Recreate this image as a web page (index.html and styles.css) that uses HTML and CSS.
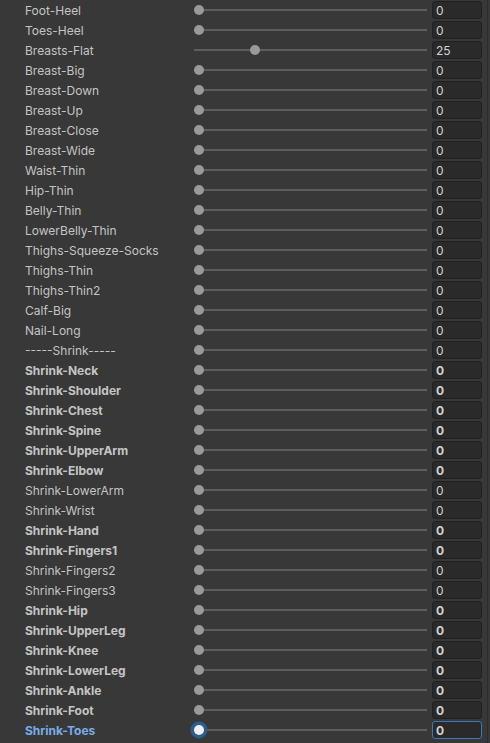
FILE: index.html
```html
<!DOCTYPE html>
<html>
<head>
<meta charset="utf-8">
<link rel="stylesheet" href="styles.css">
</head>
<body>
<div class="panel">
  <div class="list">
    <div class="row"><span class="label">Foot-Heel</span><div class="slider"><div class="track"></div><div class="thumb" style="left:0px"></div></div><div class="field">0</div></div>
    <div class="row"><span class="label">Toes-Heel</span><div class="slider"><div class="track"></div><div class="thumb" style="left:0px"></div></div><div class="field">0</div></div>
    <div class="row"><span class="label">Breasts-Flat</span><div class="slider"><div class="track"></div><div class="thumb" style="left:56px"></div></div><div class="field">25</div></div>
    <div class="row"><span class="label">Breast-Big</span><div class="slider"><div class="track"></div><div class="thumb" style="left:0px"></div></div><div class="field">0</div></div>
    <div class="row"><span class="label">Breast-Down</span><div class="slider"><div class="track"></div><div class="thumb" style="left:0px"></div></div><div class="field">0</div></div>
    <div class="row"><span class="label">Breast-Up</span><div class="slider"><div class="track"></div><div class="thumb" style="left:0px"></div></div><div class="field">0</div></div>
    <div class="row"><span class="label">Breast-Close</span><div class="slider"><div class="track"></div><div class="thumb" style="left:0px"></div></div><div class="field">0</div></div>
    <div class="row"><span class="label">Breast-Wide</span><div class="slider"><div class="track"></div><div class="thumb" style="left:0px"></div></div><div class="field">0</div></div>
    <div class="row"><span class="label">Waist-Thin</span><div class="slider"><div class="track"></div><div class="thumb" style="left:0px"></div></div><div class="field">0</div></div>
    <div class="row"><span class="label">Hip-Thin</span><div class="slider"><div class="track"></div><div class="thumb" style="left:0px"></div></div><div class="field">0</div></div>
    <div class="row"><span class="label">Belly-Thin</span><div class="slider"><div class="track"></div><div class="thumb" style="left:0px"></div></div><div class="field">0</div></div>
    <div class="row"><span class="label">LowerBelly-Thin</span><div class="slider"><div class="track"></div><div class="thumb" style="left:0px"></div></div><div class="field">0</div></div>
    <div class="row"><span class="label">Thighs-Squeeze-Socks</span><div class="slider"><div class="track"></div><div class="thumb" style="left:0px"></div></div><div class="field">0</div></div>
    <div class="row"><span class="label">Thighs-Thin</span><div class="slider"><div class="track"></div><div class="thumb" style="left:0px"></div></div><div class="field">0</div></div>
    <div class="row"><span class="label">Thighs-Thin2</span><div class="slider"><div class="track"></div><div class="thumb" style="left:0px"></div></div><div class="field">0</div></div>
    <div class="row"><span class="label">Calf-Big</span><div class="slider"><div class="track"></div><div class="thumb" style="left:0px"></div></div><div class="field">0</div></div>
    <div class="row"><span class="label">Nail-Long</span><div class="slider"><div class="track"></div><div class="thumb" style="left:0px"></div></div><div class="field">0</div></div>
    <div class="row"><span class="label">-----Shrink-----</span><div class="slider"><div class="track"></div><div class="thumb" style="left:0px"></div></div><div class="field">0</div></div>
    <div class="row mod"><span class="label">Shrink-Neck</span><div class="slider"><div class="track"></div><div class="thumb" style="left:0px"></div></div><div class="field">0</div></div>
    <div class="row mod"><span class="label">Shrink-Shoulder</span><div class="slider"><div class="track"></div><div class="thumb" style="left:0px"></div></div><div class="field">0</div></div>
    <div class="row mod"><span class="label">Shrink-Chest</span><div class="slider"><div class="track"></div><div class="thumb" style="left:0px"></div></div><div class="field">0</div></div>
    <div class="row mod"><span class="label">Shrink-Spine</span><div class="slider"><div class="track"></div><div class="thumb" style="left:0px"></div></div><div class="field">0</div></div>
    <div class="row mod"><span class="label">Shrink-UpperArm</span><div class="slider"><div class="track"></div><div class="thumb" style="left:0px"></div></div><div class="field">0</div></div>
    <div class="row mod"><span class="label">Shrink-Elbow</span><div class="slider"><div class="track"></div><div class="thumb" style="left:0px"></div></div><div class="field">0</div></div>
    <div class="row"><span class="label">Shrink-LowerArm</span><div class="slider"><div class="track"></div><div class="thumb" style="left:0px"></div></div><div class="field">0</div></div>
    <div class="row"><span class="label">Shrink-Wrist</span><div class="slider"><div class="track"></div><div class="thumb" style="left:0px"></div></div><div class="field">0</div></div>
    <div class="row mod"><span class="label">Shrink-Hand</span><div class="slider"><div class="track"></div><div class="thumb" style="left:0px"></div></div><div class="field">0</div></div>
    <div class="row mod"><span class="label">Shrink-Fingers1</span><div class="slider"><div class="track"></div><div class="thumb" style="left:0px"></div></div><div class="field">0</div></div>
    <div class="row"><span class="label">Shrink-Fingers2</span><div class="slider"><div class="track"></div><div class="thumb" style="left:0px"></div></div><div class="field">0</div></div>
    <div class="row"><span class="label">Shrink-Fingers3</span><div class="slider"><div class="track"></div><div class="thumb" style="left:0px"></div></div><div class="field">0</div></div>
    <div class="row mod"><span class="label">Shrink-Hip</span><div class="slider"><div class="track"></div><div class="thumb" style="left:0px"></div></div><div class="field">0</div></div>
    <div class="row mod"><span class="label">Shrink-UpperLeg</span><div class="slider"><div class="track"></div><div class="thumb" style="left:0px"></div></div><div class="field">0</div></div>
    <div class="row mod"><span class="label">Shrink-Knee</span><div class="slider"><div class="track"></div><div class="thumb" style="left:0px"></div></div><div class="field">0</div></div>
    <div class="row mod"><span class="label">Shrink-LowerLeg</span><div class="slider"><div class="track"></div><div class="thumb" style="left:0px"></div></div><div class="field">0</div></div>
    <div class="row mod"><span class="label">Shrink-Ankle</span><div class="slider"><div class="track"></div><div class="thumb" style="left:0px"></div></div><div class="field">0</div></div>
    <div class="row mod"><span class="label">Shrink-Foot</span><div class="slider"><div class="track"></div><div class="thumb" style="left:0px"></div></div><div class="field">0</div></div>
    <div class="row mod focus"><span class="label">Shrink-Toes</span><div class="slider"><div class="track"></div><div class="thumb" style="left:0px"></div></div><div class="field">0</div></div>
  </div>
  <div class="edge"></div>
</div>
</body>
</html>
```

FILE: styles.css
```css
html, body {
  margin: 0;
  padding: 0;
  background: #383838;
  height: 100%;
  overflow: hidden;
}

.panel {
  display: flex;
  width: 490px;
  height: 743px;
}

.list {
  width: 487px;
  display: flex;
  flex-direction: column;
}

.edge {
  width: 1px;
  background: #2c2c2c;
}

.row {
  height: 20px;
  display: flex;
  align-items: center;
  font-family: Inter, "Noto Sans", sans-serif;
  font-size: 12px;
  color: #c4c4c4;
}

.label {
  width: 194px;
  padding-left: 25px;
  padding-top: 1px;
  box-sizing: border-box;
  white-space: nowrap;
  line-height: 19px;
}

.mod .label,
.mod .field {
  font-weight: 700;
}

.slider {
  position: relative;
  width: 233px;
  height: 20px;
  display: flex;
  align-items: center;
}

.track {
  width: 100%;
  height: 2px;
  background: #5e5e5e;
}

.thumb {
  position: absolute;
  top: 5px;
  width: 10px;
  height: 10px;
  border-radius: 50%;
  background: #999999;
}

.field {
  margin-left: 5px;
  width: 50px;
  height: 18px;
  box-sizing: border-box;
  background: #2a2a2a;
  border: 1px solid #212121;
  border-radius: 3px;
  padding-left: 3px;
  padding-top: 1px;
  line-height: 15px;
  color: #d2d2d2;
}

.focus .label {
  color: #7bacea;
}

.focus .thumb {
  background: #f0f0f0;
  box-shadow: 0 0 0 3.5px #2c5d8c;
}

.focus .field {
  border-color: #3a79bb;
}
```
